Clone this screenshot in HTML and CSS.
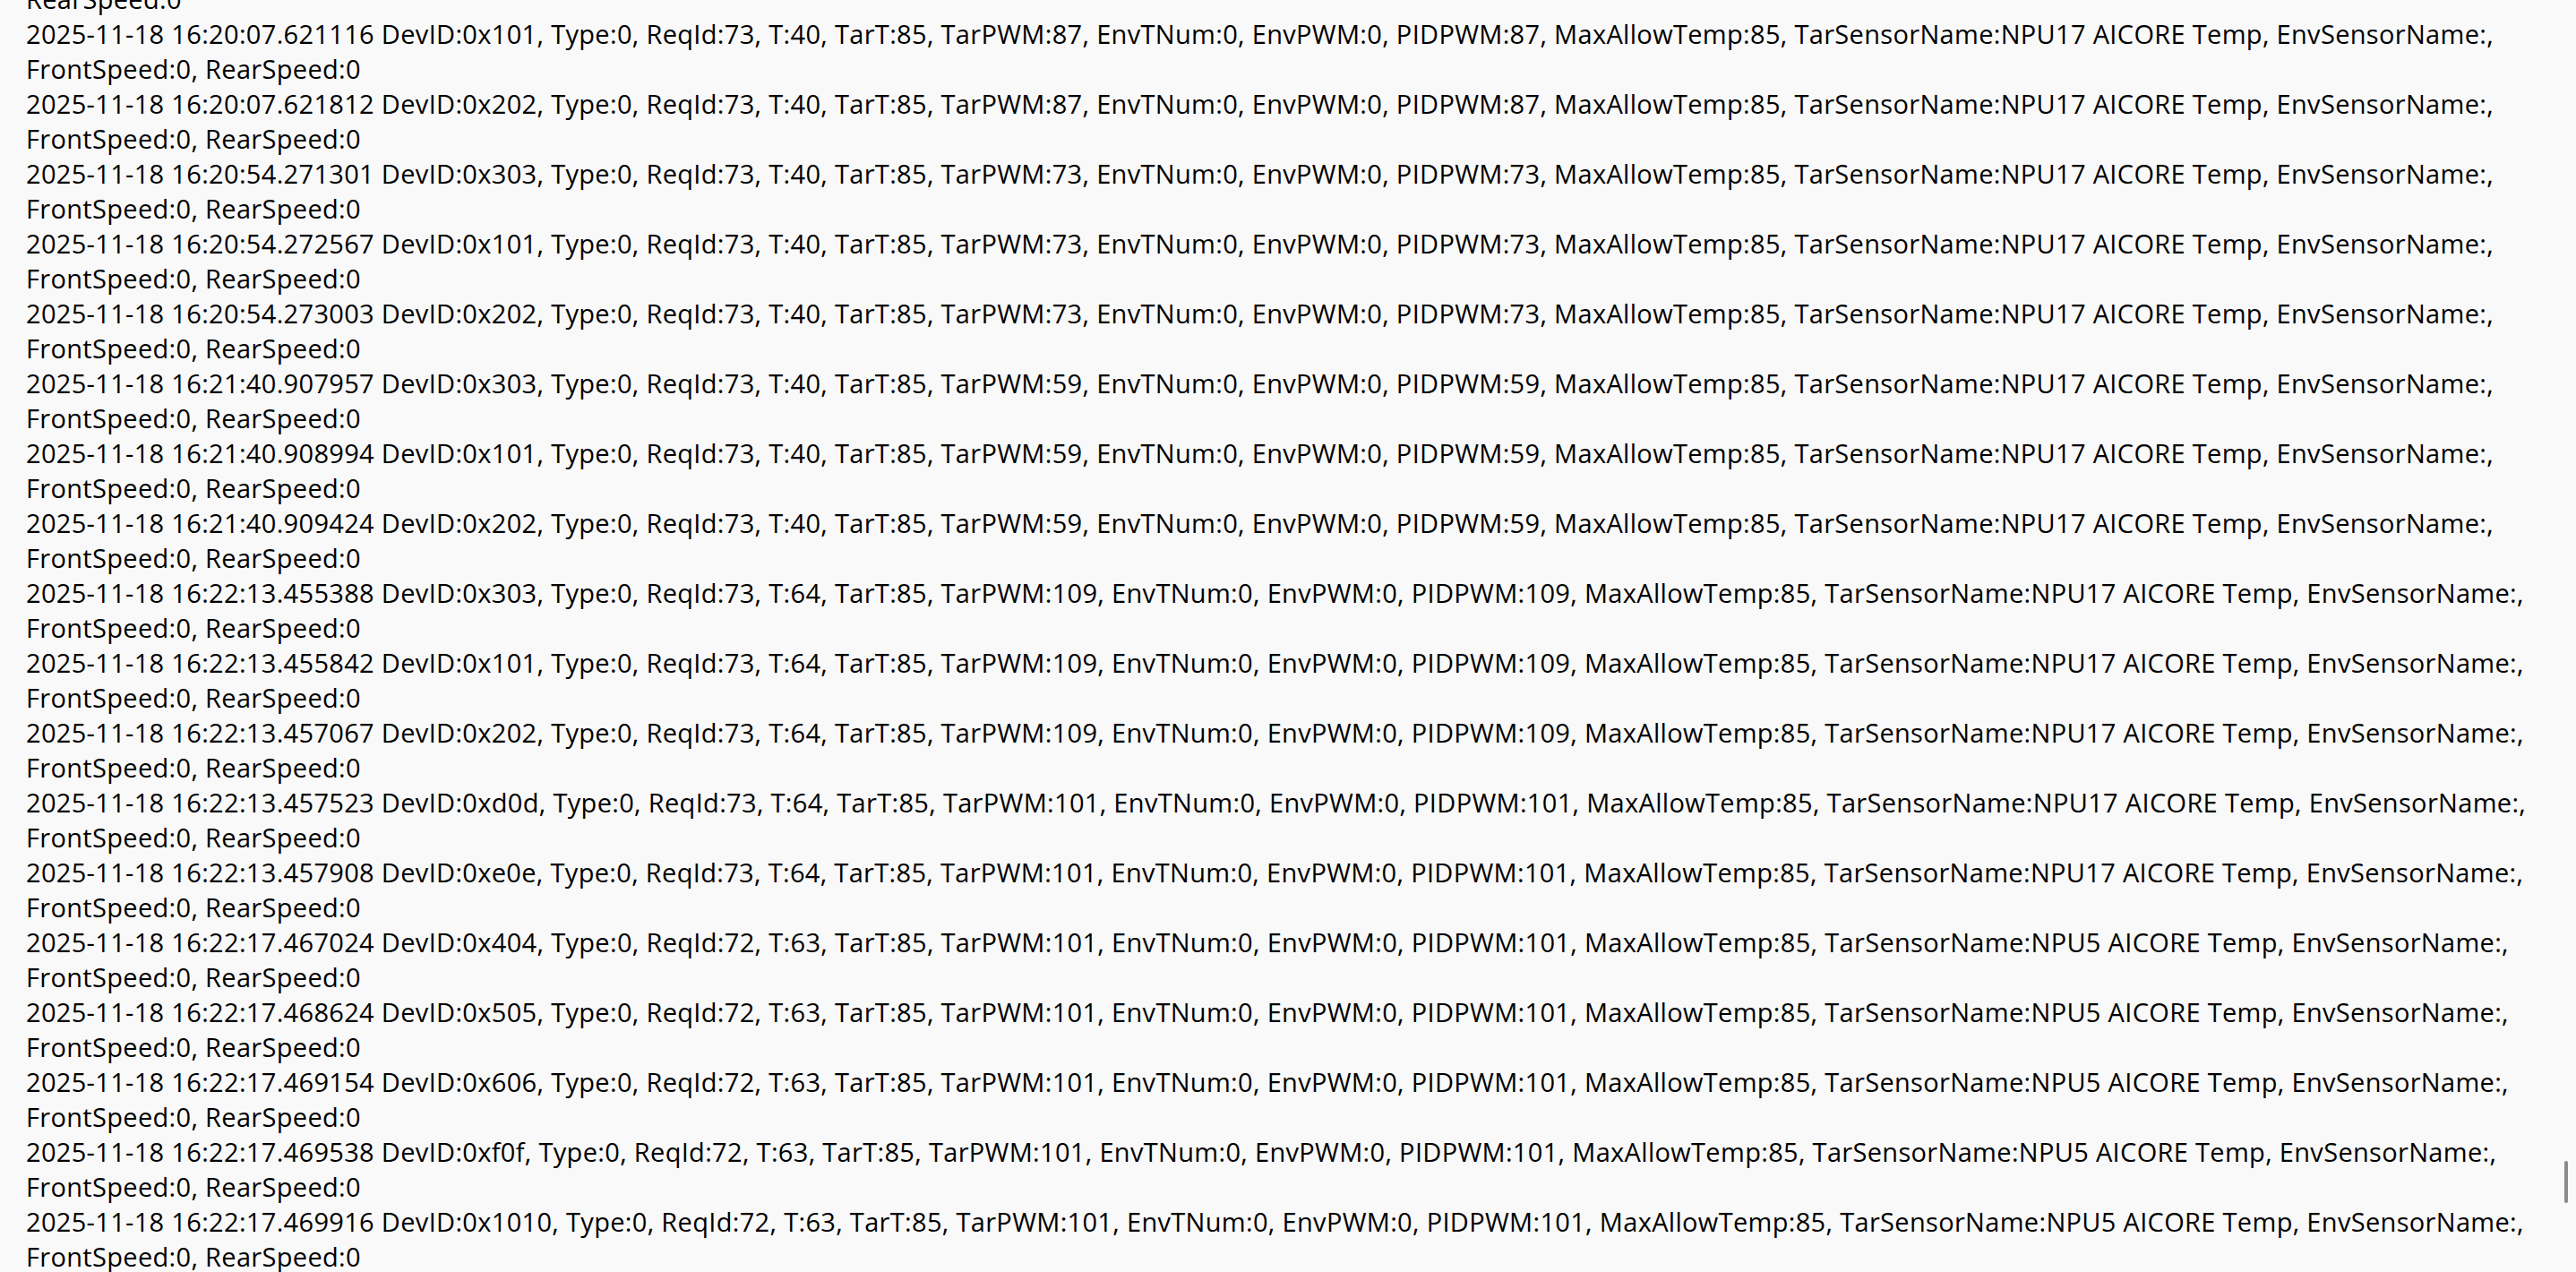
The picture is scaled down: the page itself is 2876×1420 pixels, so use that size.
FILE: index.html
```html
<!DOCTYPE html>
<html lang="en">
<head>
<meta charset="utf-8">
<title>fan control log</title>
<link rel="stylesheet" href="styles.css">
</head>
<body>
<main class="viewport">
  <div class="log">
    <p class="entry"><span class="tail">RearSpeed:0</span></p>
    <p class="entry">2025-11-18 16:20:07.621116 DevID:0x101, Type:0, ReqId:73, T:40, TarT:85, TarPWM:87, EnvTNum:0, EnvPWM:0, PIDPWM:87, MaxAllowTemp:85, TarSensorName:NPU17 AICORE Temp, EnvSensorName:, <span class="tail">FrontSpeed:0, RearSpeed:0</span></p>
    <p class="entry">2025-11-18 16:20:07.621812 DevID:0x202, Type:0, ReqId:73, T:40, TarT:85, TarPWM:87, EnvTNum:0, EnvPWM:0, PIDPWM:87, MaxAllowTemp:85, TarSensorName:NPU17 AICORE Temp, EnvSensorName:, <span class="tail">FrontSpeed:0, RearSpeed:0</span></p>
    <p class="entry">2025-11-18 16:20:54.271301 DevID:0x303, Type:0, ReqId:73, T:40, TarT:85, TarPWM:73, EnvTNum:0, EnvPWM:0, PIDPWM:73, MaxAllowTemp:85, TarSensorName:NPU17 AICORE Temp, EnvSensorName:, <span class="tail">FrontSpeed:0, RearSpeed:0</span></p>
    <p class="entry">2025-11-18 16:20:54.272567 DevID:0x101, Type:0, ReqId:73, T:40, TarT:85, TarPWM:73, EnvTNum:0, EnvPWM:0, PIDPWM:73, MaxAllowTemp:85, TarSensorName:NPU17 AICORE Temp, EnvSensorName:, <span class="tail">FrontSpeed:0, RearSpeed:0</span></p>
    <p class="entry">2025-11-18 16:20:54.273003 DevID:0x202, Type:0, ReqId:73, T:40, TarT:85, TarPWM:73, EnvTNum:0, EnvPWM:0, PIDPWM:73, MaxAllowTemp:85, TarSensorName:NPU17 AICORE Temp, EnvSensorName:, <span class="tail">FrontSpeed:0, RearSpeed:0</span></p>
    <p class="entry">2025-11-18 16:21:40.907957 DevID:0x303, Type:0, ReqId:73, T:40, TarT:85, TarPWM:59, EnvTNum:0, EnvPWM:0, PIDPWM:59, MaxAllowTemp:85, TarSensorName:NPU17 AICORE Temp, EnvSensorName:, <span class="tail">FrontSpeed:0, RearSpeed:0</span></p>
    <p class="entry">2025-11-18 16:21:40.908994 DevID:0x101, Type:0, ReqId:73, T:40, TarT:85, TarPWM:59, EnvTNum:0, EnvPWM:0, PIDPWM:59, MaxAllowTemp:85, TarSensorName:NPU17 AICORE Temp, EnvSensorName:, <span class="tail">FrontSpeed:0, RearSpeed:0</span></p>
    <p class="entry">2025-11-18 16:21:40.909424 DevID:0x202, Type:0, ReqId:73, T:40, TarT:85, TarPWM:59, EnvTNum:0, EnvPWM:0, PIDPWM:59, MaxAllowTemp:85, TarSensorName:NPU17 AICORE Temp, EnvSensorName:, <span class="tail">FrontSpeed:0, RearSpeed:0</span></p>
    <p class="entry">2025-11-18 16:22:13.455388 DevID:0x303, Type:0, ReqId:73, T:64, TarT:85, TarPWM:109, EnvTNum:0, EnvPWM:0, PIDPWM:109, MaxAllowTemp:85, TarSensorName:NPU17 AICORE Temp, EnvSensorName:, <span class="tail">FrontSpeed:0, RearSpeed:0</span></p>
    <p class="entry">2025-11-18 16:22:13.455842 DevID:0x101, Type:0, ReqId:73, T:64, TarT:85, TarPWM:109, EnvTNum:0, EnvPWM:0, PIDPWM:109, MaxAllowTemp:85, TarSensorName:NPU17 AICORE Temp, EnvSensorName:, <span class="tail">FrontSpeed:0, RearSpeed:0</span></p>
    <p class="entry">2025-11-18 16:22:13.457067 DevID:0x202, Type:0, ReqId:73, T:64, TarT:85, TarPWM:109, EnvTNum:0, EnvPWM:0, PIDPWM:109, MaxAllowTemp:85, TarSensorName:NPU17 AICORE Temp, EnvSensorName:, <span class="tail">FrontSpeed:0, RearSpeed:0</span></p>
    <p class="entry">2025-11-18 16:22:13.457523 DevID:0xd0d, Type:0, ReqId:73, T:64, TarT:85, TarPWM:101, EnvTNum:0, EnvPWM:0, PIDPWM:101, MaxAllowTemp:85, TarSensorName:NPU17 AICORE Temp, EnvSensorName:, <span class="tail">FrontSpeed:0, RearSpeed:0</span></p>
    <p class="entry">2025-11-18 16:22:13.457908 DevID:0xe0e, Type:0, ReqId:73, T:64, TarT:85, TarPWM:101, EnvTNum:0, EnvPWM:0, PIDPWM:101, MaxAllowTemp:85, TarSensorName:NPU17 AICORE Temp, EnvSensorName:, <span class="tail">FrontSpeed:0, RearSpeed:0</span></p>
    <p class="entry">2025-11-18 16:22:17.467024 DevID:0x404, Type:0, ReqId:72, T:63, TarT:85, TarPWM:101, EnvTNum:0, EnvPWM:0, PIDPWM:101, MaxAllowTemp:85, TarSensorName:NPU5 AICORE Temp, EnvSensorName:, <span class="tail">FrontSpeed:0, RearSpeed:0</span></p>
    <p class="entry">2025-11-18 16:22:17.468624 DevID:0x505, Type:0, ReqId:72, T:63, TarT:85, TarPWM:101, EnvTNum:0, EnvPWM:0, PIDPWM:101, MaxAllowTemp:85, TarSensorName:NPU5 AICORE Temp, EnvSensorName:, <span class="tail">FrontSpeed:0, RearSpeed:0</span></p>
    <p class="entry">2025-11-18 16:22:17.469154 DevID:0x606, Type:0, ReqId:72, T:63, TarT:85, TarPWM:101, EnvTNum:0, EnvPWM:0, PIDPWM:101, MaxAllowTemp:85, TarSensorName:NPU5 AICORE Temp, EnvSensorName:, <span class="tail">FrontSpeed:0, RearSpeed:0</span></p>
    <p class="entry">2025-11-18 16:22:17.469538 DevID:0xf0f, Type:0, ReqId:72, T:63, TarT:85, TarPWM:101, EnvTNum:0, EnvPWM:0, PIDPWM:101, MaxAllowTemp:85, TarSensorName:NPU5 AICORE Temp, EnvSensorName:, <span class="tail">FrontSpeed:0, RearSpeed:0</span></p>
    <p class="entry">2025-11-18 16:22:17.469916 DevID:0x1010, Type:0, ReqId:72, T:63, TarT:85, TarPWM:101, EnvTNum:0, EnvPWM:0, PIDPWM:101, MaxAllowTemp:85, TarSensorName:NPU5 AICORE Temp, EnvSensorName:, <span class="tail">FrontSpeed:0, RearSpeed:0</span></p>
  </div>
  <div class="scroll-thumb"></div>
</main>
</body>
</html>
```

FILE: styles.css
```css
html, body {
  margin: 0;
  padding: 0;
  background: #f9f9f9;
}

.viewport {
  position: relative;
  height: 100vh;
  overflow: hidden;
  background: #f9f9f9;
}

.log {
  margin-top: -21px;
  padding-left: 29px;
  padding-right: 40px;
  font-family: "Open Sans", "Noto Sans", sans-serif;
  font-size: 29px;
  letter-spacing: 0.32px;
  line-height: 39px;
  color: #000;
}

.entry {
  margin: 0;
  white-space: nowrap;
}

.tail {
  display: block;
}

.scroll-thumb {
  position: absolute;
  right: 9px;
  top: 1296px;
  width: 4px;
  height: 47px;
  border-radius: 2px;
  background: #8a8a8a;
}
```
